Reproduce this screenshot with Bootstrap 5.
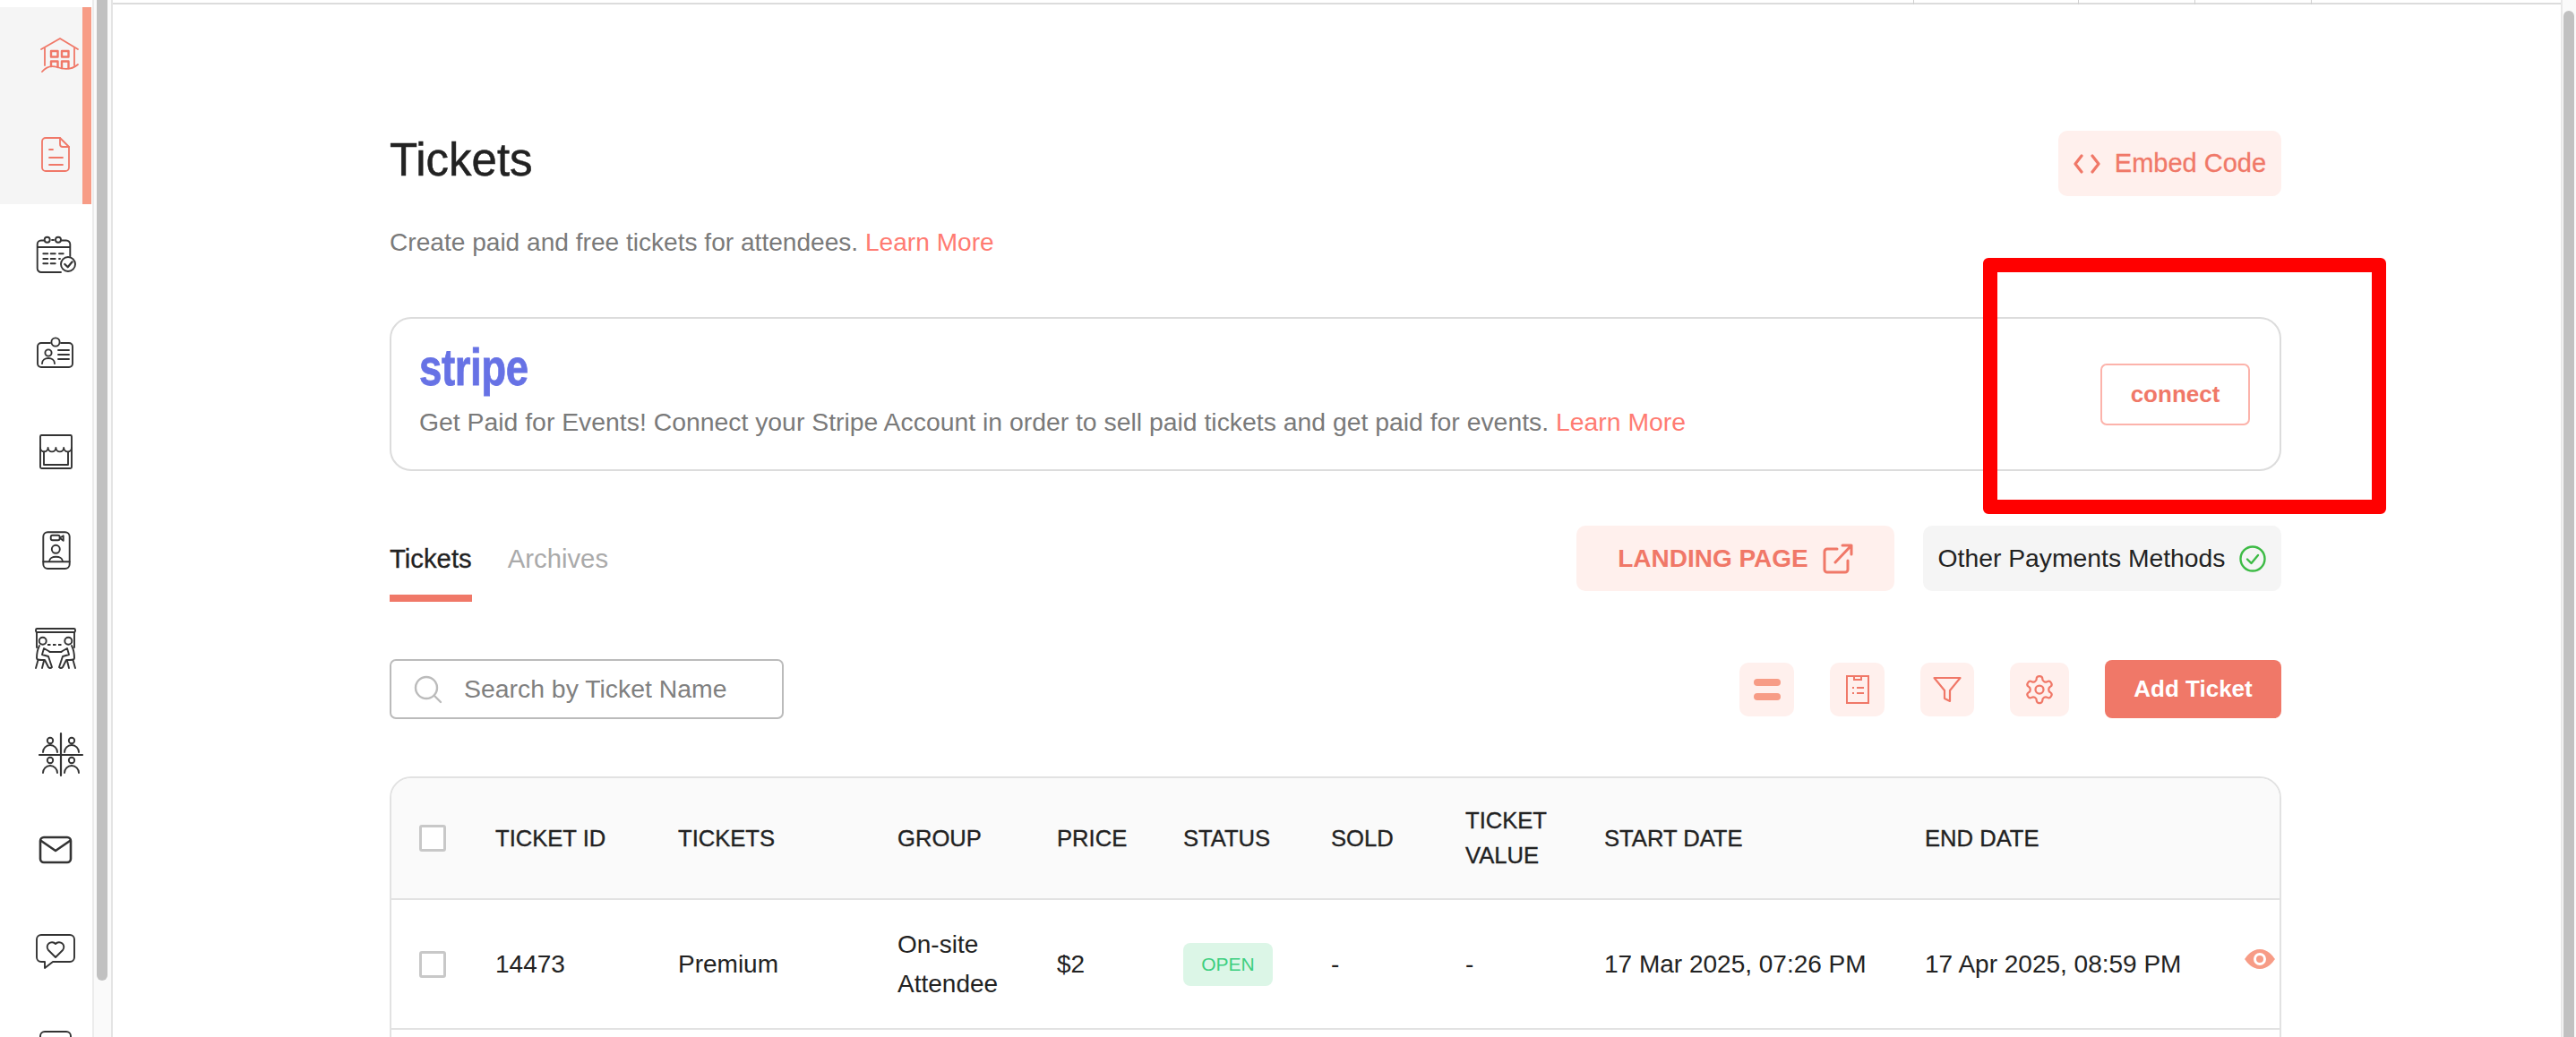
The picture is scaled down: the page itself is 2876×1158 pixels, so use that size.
<!DOCTYPE html>
<html lang="en">
<head>
    <meta charset="UTF-8">
    <meta name="viewport" content="width=device-width, initial-scale=1.0">
    <title>Tickets</title>
    <link href="https://cdn.jsdelivr.net/npm/bootstrap@5.3.0/dist/css/bootstrap.min.css" rel="stylesheet">
    <style>
        html, body { height: 1158px; overflow: hidden; }
        body { font-family: "Liberation Sans", Arial, sans-serif; color: #222; background: #fff; position: relative; }
        .shell { height: 1158px; }

        /* left icon rail */
        .rail { width: 103px; flex: none; padding-top: 8px; }
        .rail-active { background: #f5f5f5; border-right: 10px solid #f79c86; width: 102px; }
        .rail-cell { height: 110px; display: flex; align-items: center; padding-left: 32px; }
        .rail-cell svg { width: 60px; height: 60px; overflow: visible; fill: none; stroke: #333; stroke-width: 1.9; stroke-linecap: round; stroke-linejoin: round; }
        .rail-active .rail-cell svg { stroke: #f07868; stroke-width: 1.8; }
        .rail-bar { width: 23px; flex: none; background: #fafafa; border-left: 2px solid #ececec; border-right: 2px solid #e4e4e4; padding: 0 3px; }
        .rail-thumb { width: 12px; height: 1095px; background: #c1c1c1; border-radius: 0 0 6px 6px; }
        .page-bar { width: 17px; flex: none; background: #fafafa; border-left: 2px solid #e8e8e8; padding: 12px 2px 0 1px; }
        .page-thumb { width: 12px; height: 1146px; background: #c1c1c1; border-radius: 6px 6px 0 0; }

        /* top strip */
        .top-strip { height: 5px; border-bottom: 2px solid #dcdcdc; padding-left: 2010px; }
        .top-strip span { border-left: 1px solid #d0d0d0; height: 5px; }
        .tick-a { width: 184px; }
        .tick-b { width: 130px; }

        .sheet { margin-left: 309px; width: 2112px; }
        .head-row { margin-top: 141px; height: 73px; }
        .page-title { font-size: 51px; line-height: 60px; font-weight: 400; margin: 0 0 8px; color: #222; -webkit-text-stroke: .5px #222; }
        .sub-text { font-size: 28.1px; line-height: 40px; color: #7a7a7a; margin: 32px 0 0; }
        .learn { color: #ff7b72; text-decoration: none; }

        .stripe-box { margin-top: 63px; height: 172px; border: 2px solid #dcdcdc; border-radius: 24px; padding: 0 33px 0 31px; }
        .stripe-mark { font-size: 57px; line-height: 58px; font-weight: 700; color: #6772e5; letter-spacing: -.5px; margin: -11px 0 14px; transform: scaleX(.8); transform-origin: left center; -webkit-text-stroke: .8px #6772e5; }
        .stripe-text { font-size: 28.37px; line-height: 36px; color: #7a7a7a; margin: 0; }
        .btn-connect { width: 167px; height: 69px; border: 2px solid #fcb3ab; border-radius: 7px; color: #f07868; font-size: 26px; font-weight: 700; background: #fff; padding: 0; }

        .tabs-row { margin-top: 61px; height: 85px; }
        .tab-list { gap: 40px; }
        .tab-link { font-size: 29.3px; line-height: 34px; height: 85px; padding: 20px 0 0; color: #aaa; text-decoration: none; display: block; }
        .tab-on { color: #222; border-bottom: 8px solid #f07868; -webkit-text-stroke: .3px #222; }
        .btn-soft { background: #fff0ed; color: #f07868; border: 0; border-radius: 10px; padding: 0; font-size: 28px; }
        .btn-embed { width: 249px; height: 73px; font-size: 29px; -webkit-text-stroke: .3px #f07868; }
        .other-wrap { gap: 32px; }
        .btn-landing { width: 355px; height: 73px; font-weight: 700; }
        .btn-other { width: 400px; height: 73px; background: #f5f5f5; color: #222; border: 0; border-radius: 10px; padding: 0; font-size: 28.3px; }

        .tool-row { margin-top: 64px; height: 67px; }
        .search-box { width: 440px; height: 67px; border: 2px solid #bbb; border-radius: 7px; padding-left: 25px; }
        .search-box input { border: 0; padding: 0; font-size: 28.4px; box-shadow: none; color: #777; }
        .search-box input::placeholder { color: #808080; opacity: 1; }
        .icon-tools { gap: 40px; }
        .btn-icon { height: 60px; width: 61px; }
        .btn-funnel { width: 60px; }
        .btn-gear { width: 66px; }
        .btn-add { width: 197px; height: 65px; background: #f07868; color: #fff; border: 0; border-radius: 8px; font-size: 26px; font-weight: 700; padding: 0; }

        /* ticket table */
        .grid-wrap { margin-top: 64px; height: 400px; border: 2px solid #e2e2e2; border-radius: 24px 24px 0 0; overflow: hidden; }
        .grid-table { table-layout: fixed; width: 2108px; margin: 0; --bs-table-bg: transparent; }
        .grid-table th { background: #fafafa; font-size: 25.6px; line-height: 39px; font-weight: 400; -webkit-text-stroke: .35px #222; height: 135px; padding: 0; vertical-align: middle; border-bottom: 2px solid #e2e2e2; color: #222; }
        .grid-table td { font-size: 28px; line-height: 44px; height: 145px; padding: 0; vertical-align: middle; border-bottom: 2px solid #e2e2e2; color: #222; }
        .grid-table .pad-check { padding-left: 31px; }
        .grid-table .tick-box { width: 30px; height: 30px; margin: 0; border: 3px solid #c8c8c8; border-radius: 3px; display: block; }
        .badge-open { background: #dcf6e7; color: #3ccf7f; font-size: 21px; font-weight: 400; width: 100px; height: 48px; line-height: 48px; padding: 0; border-radius: 8px; }
        .eye { width: 34px; height: 24px; display: block; margin-bottom: 12px; }

        /* red annotation over the screenshot */
        .mark-frame { position: absolute; left: 2214px; top: 288px; width: 450px; height: 286px; border: 16px solid #ff0000; border-radius: 6px; }
    </style>
</head>
<body>
    <div class="d-flex shell">
        <!-- Icon rail -->
        <aside class="rail">
            <div class="rail-active">
                <div class="rail-cell">
                    <svg viewBox="0 0 60 60"><path d="M14 22 L35 10 L55 22"/><path d="M18 21 V40 M51 21 V40"/><path d="M15 47 C20 41 26 40 32 42 C40 45 48 45 55 39"/><g stroke-width="2.4"><rect x="25" y="24" width="7.5" height="6.5"/><rect x="37" y="24" width="7.5" height="6.5"/><path d="M25 41 V35.5 H32.5 V42 M37 43 V35.5 H44.5 V43"/></g></svg>
                </div>
                <div class="rail-cell">
                    <svg viewBox="0 0 60 60"><path d="M19 11 H35 L45 21 V44 A4 4 0 0 1 41 48 H19 A4 4 0 0 1 15 44 V15 A4 4 0 0 1 19 11 Z"/><path d="M35 11 V18 A3 3 0 0 0 38 21 H45"/><path d="M23 24 H27 M23 33 H38 M23 41 H38"/></svg>
                </div>
            </div>
            <div class="rail-cell">
                <svg viewBox="0 0 60 60"><path d="M17 15.500 H14 A4.300 4.300 0 0 0 9.700 19.800 V46.700 A4.300 4.300 0 0 0 14 51 H36"/><path d="M26 15 H28 M36.500 15.500 H42 A4.300 4.300 0 0 1 46.300 19.800 V33"/><circle cx="20.700" cy="14.700" r="3"/><circle cx="33" cy="14.700" r="3"/><path d="M10 23 H46"/><path d="M16.300 30.300 H21.300 M24.700 30.300 H29.700 M34 30.300 H38.700 M16.300 36 H21.300 M24.700 36 H29.700 M34 36 H35 M16.300 41.300 H21.300 M24.700 41.300 H29.700"/><circle cx="44" cy="42" r="8"/><path d="M40.300 42 L43.700 45.300 L48.700 39.300" stroke-width="2.200"/></svg>
            </div>
            <div class="rail-cell">
                <svg viewBox="0 0 60 60"><path d="M24 20 H14 A4 4 0 0 0 10 24 V43 A4 4 0 0 0 14 47 H45 A4 4 0 0 0 49 43 V24 A4 4 0 0 0 45 20 H36"/><circle cx="30" cy="19" r="4.600"/><circle cx="22" cy="31" r="3.600"/><path d="M15 43 C15 35 29 35 29 43"/><path d="M33 28 H45 M33 33 H45 M33 38 H45"/></svg>
            </div>
            <div class="rail-cell">
                <svg viewBox="0 0 60 60"><rect x="13" y="13" width="35" height="37" rx="1.500"/><path d="M13 27 A4.300 4.300 0 0 0 21.600 27 A4.400 4.400 0 0 0 30.400 27 A4.400 4.400 0 0 0 39.200 27 A4.400 4.400 0 0 0 48 27"/><path d="M17 32 V46 H44 V32"/></svg>
            </div>
            <div class="rail-cell">
                <svg viewBox="0 0 60 60"><rect x="16.300" y="11.300" width="29.400" height="40.700" rx="5"/><path d="M16.300 44.300 H45.700"/><rect x="24.700" y="14.700" width="10" height="5.600" rx="2"/><path d="M34.700 17.700 L38.700 15.300 V20.700 Z"/><circle cx="30.300" cy="30.300" r="4.500"/><path d="M23 44 C23 37 38 37 38 44"/></svg>
            </div>
            <div class="rail-cell">
                <svg viewBox="0 0 60 60"><rect x="8" y="9" width="44" height="4" rx="1.500"/><path d="M9 13 V30 M51 13 V30"/><path d="M21 27 H38" stroke-dasharray="3.500 2.500" stroke-linecap="butt"/><path d="M23.500 35 H36.500"/><g id="sitter"><circle cx="15.700" cy="22.700" r="4"/><path d="M12 28 C10 32 9 38 9 42 C9 44 11 44 18 44 L22 52 Q24 54 26 52 L22 40 L15 38 L17 31 L24 35"/><path d="M10.500 44 L8 53 M17 45 L15 53"/></g><use href="#sitter" transform="matrix(-1 0 0 1 60 0)"/></svg>
            </div>
            <div class="rail-cell">
                <svg viewBox="0 0 60 60"><path d="M36 16 V63 M12 40 H60" stroke-width="2.200"/><circle cx="24" cy="24" r="3.200"/><circle cx="48" cy="24" r="3.200"/><circle cx="24" cy="46" r="3.200"/><circle cx="48" cy="46" r="3.200"/><path d="M16 37 A8 8 0 0 1 32 37 M40 37 A8 8 0 0 1 56 37 M16 60 A8 8 0 0 1 32 60 M40 60 A8 8 0 0 1 56 60"/></svg>
            </div>
            <div class="rail-cell">
                <svg viewBox="0 0 60 60"><rect x="13" y="22" width="34" height="28" rx="4" stroke-width="2.600"/><path d="M14 26 L30 37 L46 26" stroke-width="2.600"/></svg>
            </div>
            <div class="rail-cell">
                <svg viewBox="0 0 60 60"><path d="M14 21 H46 A5 5 0 0 1 51 26 V46 A5 5 0 0 1 46 51 H27 L18 58 L18 51 H14 A5 5 0 0 1 9 46 V26 A5 5 0 0 1 14 21 Z"/><path d="M30 46 L22 38 A5.200 5.200 0 0 1 30 31 A5.200 5.200 0 0 1 38 38 Z"/></svg>
            </div>
            <div class="rail-cell">
                <svg viewBox="0 0 60 60"><rect x="13" y="19" width="34" height="30" rx="5"/></svg>
            </div>
        </aside>
        <div class="rail-bar"><div class="rail-thumb"></div></div>

        <main class="flex-grow-1">
            <div class="top-strip d-flex">
                <span class="tick-a"></span><span class="tick-b"></span><span class="tick-b"></span><span></span>
            </div>
            <div class="sheet">
                <div class="head-row d-flex justify-content-between align-items-center">
                    <h1 class="page-title">Tickets</h1>
                    <button class="btn btn-soft btn-embed d-flex align-items-center justify-content-center gap-3">
                        <svg width="30" height="22" viewBox="0 0 30 22" fill="none" stroke="#f07868" stroke-width="3.200" stroke-linecap="round" stroke-linejoin="round"><path d="M9 2 L2 11 L9 20 M21 2 L28 11 L21 20"/></svg>
                        Embed Code
                    </button>
                </div>
                <p class="sub-text">Create paid and free tickets for attendees. <a class="learn" href="#">Learn More</a></p>

                <div class="stripe-box d-flex justify-content-between align-items-center">
                    <div>
                        <div class="stripe-mark">stripe</div>
                        <p class="stripe-text">Get Paid for Events! Connect your Stripe Account in order to sell paid tickets and get paid for events. <a class="learn" href="#">Learn More</a></p>
                    </div>
                    <button class="btn btn-connect">connect</button>
                </div>

                <div class="tabs-row d-flex justify-content-between align-items-start">
                    <div class="d-flex tab-list">
                        <a class="tab-link tab-on" href="#">Tickets</a>
                        <a class="tab-link" href="#">Archives</a>
                    </div>
                    <div class="d-flex other-wrap">
                        <button class="btn btn-soft btn-landing d-flex align-items-center justify-content-center gap-3">
                            LANDING PAGE
                            <svg width="34" height="34" viewBox="0 0 34 34" fill="none" stroke="#f07868" stroke-width="3" stroke-linecap="round" stroke-linejoin="round"><path d="M16 6 H5 A3 3 0 0 0 2 9 V29 A3 3 0 0 0 5 32 H25 A3 3 0 0 0 28 29 V19"/><path d="M14 21 L32 2 M22 2 H32 V12"/></svg>
                        </button>
                        <button class="btn btn-other d-flex align-items-center justify-content-center gap-3">
                            Other Payments Methods
                            <svg width="30" height="30" viewBox="0 0 30 30" fill="none" stroke="#3dbb45" stroke-width="2.400" stroke-linecap="round" stroke-linejoin="round"><circle cx="15" cy="15" r="13.500"/><path d="M9 15.500 L13.500 20 L21 11"/></svg>
                        </button>
                    </div>
                </div>

                <div class="tool-row d-flex justify-content-between align-items-center">
                    <div class="search-box d-flex align-items-center gap-4">
                        <svg width="32" height="32" viewBox="0 0 32 32" class="flex-shrink-0" fill="none" stroke="#bbb" stroke-width="2.400" stroke-linecap="round"><circle cx="14" cy="14" r="12"/><path d="M23 23 L30 30"/></svg>
                        <input class="form-control" type="text" placeholder="Search by Ticket Name">
                    </div>
                    <div class="d-flex align-items-center icon-tools">
                        <button class="btn btn-soft btn-icon d-flex align-items-center justify-content-center">
                            <svg width="30" height="24" viewBox="0 0 30 24" fill="#f79c86"><rect y="0" width="30" height="8" rx="4"/><rect y="16" width="30" height="8" rx="4"/></svg>
                        </button>
                        <button class="btn btn-soft btn-icon d-flex align-items-center justify-content-center">
                            <svg width="26" height="32" viewBox="0 0 26 32" fill="none" stroke="#f07868" stroke-width="2"><rect x="1" y="1" width="24" height="30"/><path d="M9 1 V5 H17 V1"/><path d="M7 14 H9 M12 14 H20 M7 20 H9 M12 20 H20"/></svg>
                        </button>
                        <button class="btn btn-soft btn-icon btn-funnel d-flex align-items-center justify-content-center">
                            <svg width="32" height="30" viewBox="0 0 32 30" fill="none" stroke="#f07868" stroke-width="2.200" stroke-linejoin="round"><path d="M1.500 2 H30.500 L19 16 V28 L13 25 V16 Z"/></svg>
                        </button>
                        <button class="btn btn-soft btn-icon btn-gear d-flex align-items-center justify-content-center">
                            <svg width="36" height="36" viewBox="0 0 24 24" fill="none" stroke="#f07868" stroke-width="1.500"><path d="M12.220 2h-.44a2 2 0 0 0-2 2v.18a2 2 0 0 1-1 1.730l-.43.25a2 2 0 0 1-2 0l-.15-.08a2 2 0 0 0-2.730.73l-.22.38a2 2 0 0 0 .73 2.730l.15.1a2 2 0 0 1 1 1.720v.51a2 2 0 0 1-1 1.740l-.15.09a2 2 0 0 0-.73 2.730l.22.38a2 2 0 0 0 2.730.73l.15-.08a2 2 0 0 1 2 0l.43.25a2 2 0 0 1 1 1.730V20a2 2 0 0 0 2 2h.44a2 2 0 0 0 2-2v-.18a2 2 0 0 1 1-1.730l.43-.25a2 2 0 0 1 2 0l.15.08a2 2 0 0 0 2.730-.73l.22-.39a2 2 0 0 0-.73-2.730l-.15-.08a2 2 0 0 1-1-1.740v-.5a2 2 0 0 1 1-1.740l.15-.09a2 2 0 0 0 .73-2.730l-.22-.38a2 2 0 0 0-2.730-.73l-.15.08a2 2 0 0 1-2 0l-.43-.25a2 2 0 0 1-1-1.730V4a2 2 0 0 0-2-2z"/><circle cx="12" cy="12" r="3"/></svg>
                        </button>
                        <button class="btn btn-add">Add Ticket</button>
                    </div>
                </div>

                <div class="grid-wrap">
                    <table class="table grid-table">
                        <colgroup>
                            <col style="width:116px"><col style="width:204px"><col style="width:245px"><col style="width:178px"><col style="width:141px"><col style="width:165px"><col style="width:150px"><col style="width:155px"><col style="width:358px"><col style="width:357px"><col style="width:39px">
                        </colgroup>
                        <thead>
                            <tr>
                                <th class="pad-check"><input class="form-check-input tick-box" type="checkbox"></th>
                                <th>TICKET ID</th>
                                <th>TICKETS</th>
                                <th>GROUP</th>
                                <th>PRICE</th>
                                <th>STATUS</th>
                                <th>SOLD</th>
                                <th>TICKET VALUE</th>
                                <th>START DATE</th>
                                <th>END DATE</th>
                                <th></th>
                            </tr>
                        </thead>
                        <tbody>
                            <tr>
                                <td class="pad-check"><input class="form-check-input tick-box" type="checkbox"></td>
                                <td>14473</td>
                                <td>Premium</td>
                                <td>On-site Attendee</td>
                                <td>$2</td>
                                <td><span class="badge badge-open">OPEN</span></td>
                                <td>-</td>
                                <td>-</td>
                                <td>17 Mar 2025, 07:26 PM</td>
                                <td>17 Apr 2025, 08:59 PM</td>
                                <td>
                                    <svg class="eye" viewBox="0 0 34 24"><path fill="#f79c86" fill-rule="evenodd" d="M17 1 C26 1 31 8 34 12 C31 16 26 23 17 23 C8 23 3 16 0 12 C3 8 8 1 17 1 Z M17 5 A7 7 0 1 0 17 19 A7 7 0 1 0 17 5 Z M17 8 A4 4 0 1 1 17 16 A4 4 0 1 1 17 8 Z"/></svg>
                                </td>
                            </tr>
                        </tbody>
                    </table>
                </div>
            </div>
        </main>
        <div class="page-bar"><div class="page-thumb"></div></div>
    </div>

    <!-- Red review box -->
    <div class="mark-frame"></div>
</body>
</html>
